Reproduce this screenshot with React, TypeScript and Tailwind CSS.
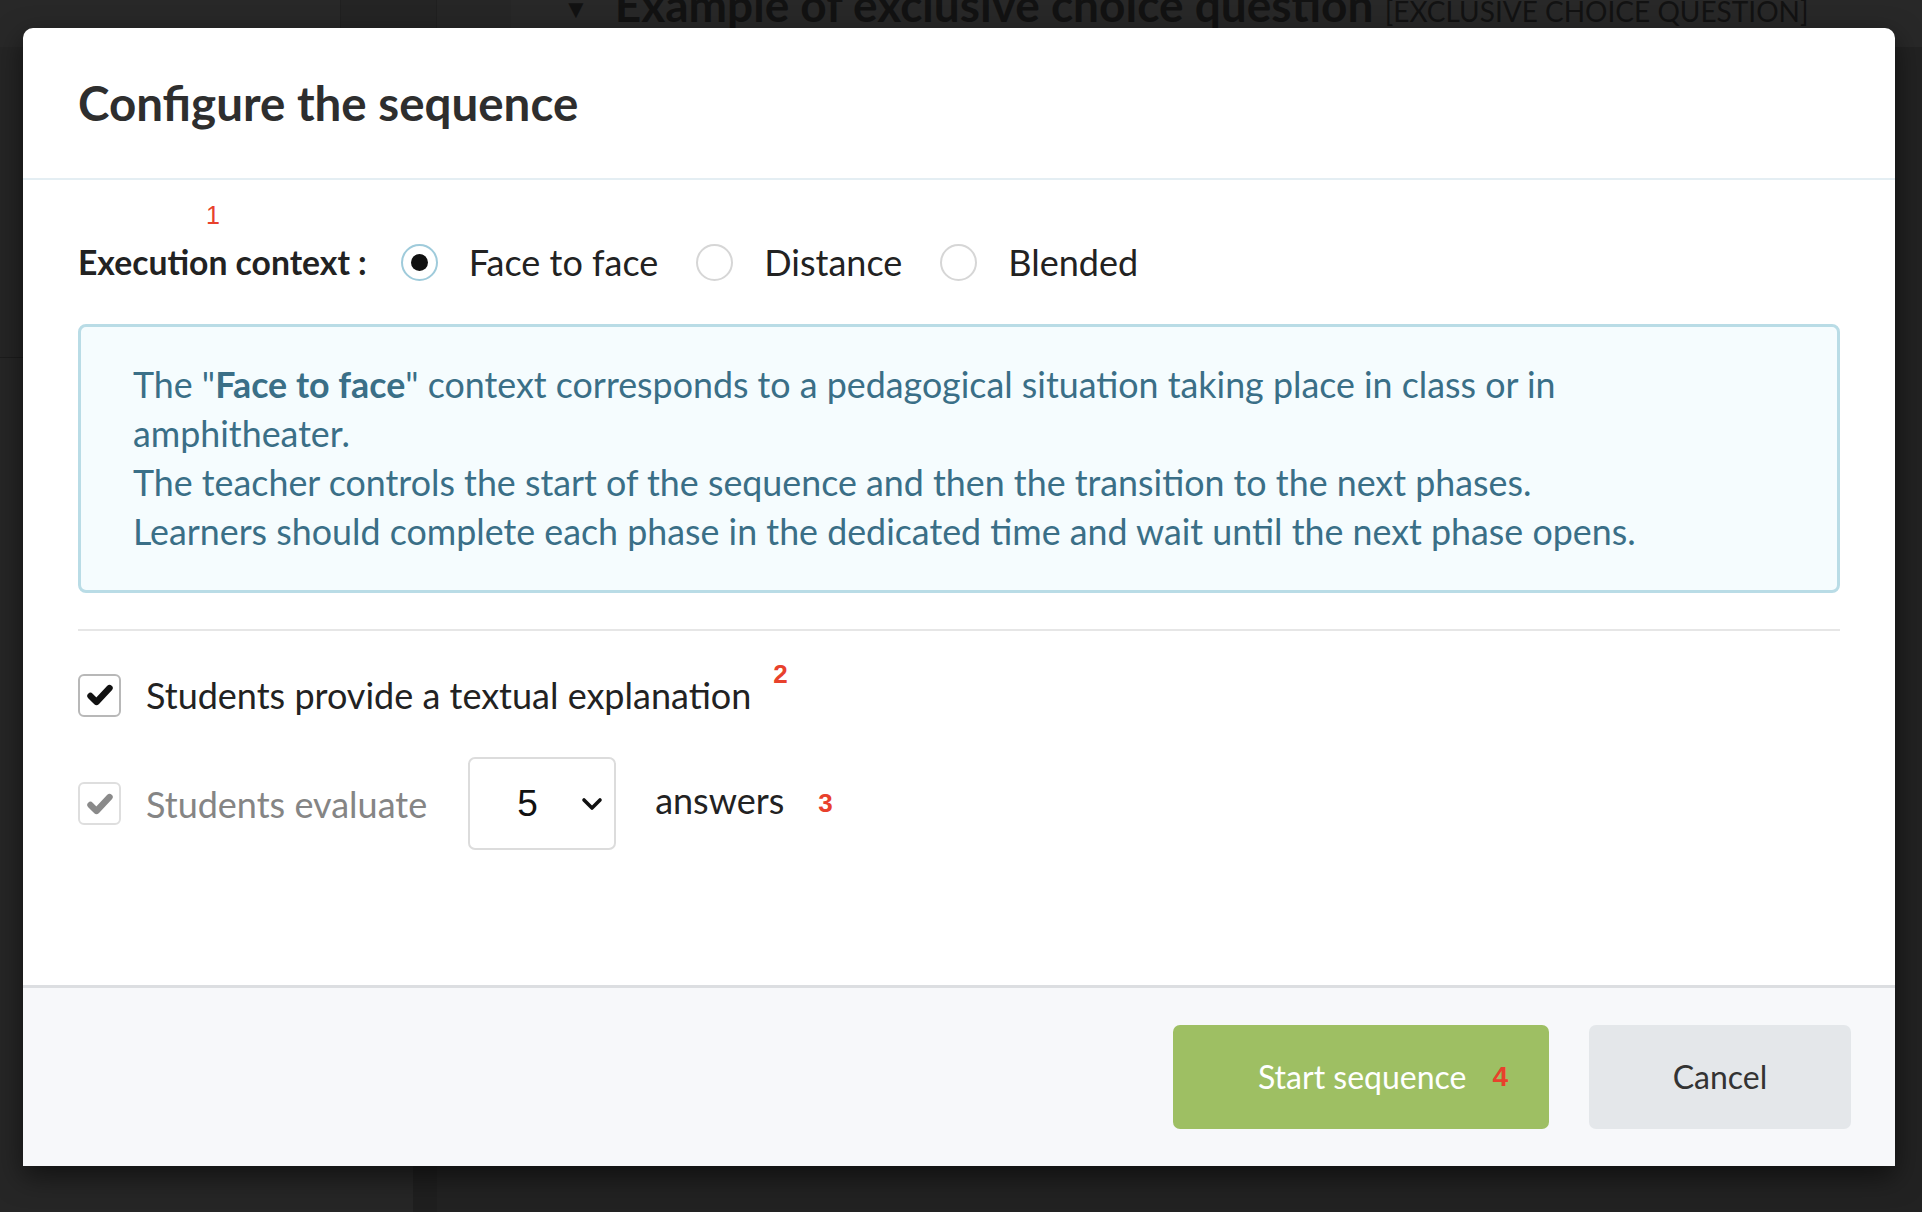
import React from 'react';

const Radio = ({ checked }: { checked?: boolean }) => (
  <span
    className={
      checked
        ? 'flex h-[37px] w-[37px] shrink-0 items-center justify-center rounded-full border-2 border-[#9fcbdb] bg-white'
        : 'flex h-[37px] w-[37px] shrink-0 items-center justify-center rounded-full border-2 border-[#d6d6d6] bg-white'
    }
  >
    {checked && <span className="h-[17px] w-[17px] rounded-full bg-[#111]" />}
  </span>
);

const Check = ({ muted }: { muted?: boolean }) => (
  <span
    className={
      muted
        ? 'flex h-[43px] w-[43px] shrink-0 items-center justify-center rounded-[6px] border-2 border-[#dedede] bg-white'
        : 'flex h-[43px] w-[43px] shrink-0 items-center justify-center rounded-[6px] border-2 border-[#b8b8b8] bg-white'
    }
  >
    <svg viewBox="0 0 24 24" className="h-[28px] w-[28px]">
      <path
        d="M3.8 12.8l5.2 5.2L20.2 6"
        fill="none"
        stroke={muted ? '#8a8a8a' : '#111'}
        strokeWidth="5.4"
        strokeLinecap="round"
        strokeLinejoin="round"
      />
    </svg>
  </span>
);

export default function App() {
  return (
    <div className="relative h-[1212px] w-[1922px] overflow-hidden bg-[#232323] font-['Lato',sans-serif]">
      {/* page behind the overlay */}
      <div className="flex h-[47px] bg-[#282828]">
        <div className="w-[340px]" />
        <div className="w-[96px] border-l border-[#202020] bg-[#242424]" />
        <div className="w-[75px] border-l border-[#202020] bg-[#262626]" />
        <div className="-mt-[25px] flex items-start gap-[26px] pl-[52px] text-[#121212]">
          <span className="pt-[14px] text-[26px]">▼</span>
          <span className="whitespace-nowrap text-[46px] leading-[60px] font-bold">
            Example of exclusive choice question{' '}
            <span className="text-[28px] font-normal">[EXCLUSIVE CHOICE QUESTION]</span>
          </span>
        </div>
      </div>
      <div className="flex h-[1165px]">
        <div className="flex w-[437px] flex-col border-r-[24px] border-[#1f1f1f]">
          <div className="h-[311px] border-b border-[#1c1c1c] bg-[#252525]" />
          <div className="flex-1 bg-[#262626]" />
        </div>
        <div className="flex-1 bg-[#222222]" />
      </div>

      {/* dialog */}
      <div className="absolute left-[23px] top-[28px] flex h-[1138px] w-[1872px] flex-col overflow-hidden rounded-t-[10px] bg-white shadow-[0_10px_28px_rgba(0,0,0,0.55)]">
        <div className="flex h-[152px] shrink-0 items-center border-b-2 border-[#e4eef3] px-[55px]">
          <h1 className="text-[47.5px] leading-none font-bold text-[#2e2e2e]">Configure the sequence</h1>
        </div>

        <div className="flex-1 px-[55px] pt-[57px] text-[#222]">
          <div className="relative flex h-[50px] items-center text-[36px]">
            <span className="absolute -top-[40px] left-[128px] font-['Liberation_Sans',sans-serif] text-[25px] text-[#e8412c]">1</span>
            <span className="mr-[34px] text-[33.7px] font-bold">Execution context :</span>
            <Radio checked />
            <span className="mr-[38px] ml-[31px]">Face to face</span>
            <Radio />
            <span className="mr-[38px] ml-[31px]">Distance</span>
            <Radio />
            <span className="ml-[31px]">Blended</span>
          </div>

          <div className="mt-[37px] rounded-[8px] border-[3px] border-[#b9dce6] bg-[#f5fcfe] px-[52px] pt-[33px] pb-[34px] text-[35.8px] leading-[49px] text-[#3a6f87]">
            The "<b>Face to face</b>" context corresponds to a pedagogical situation taking place in class or in
            <br />
            amphitheater.
            <br />
            The teacher controls the start of the sequence and then the transition to the next phases.
            <br />
            Learners should complete each phase in the dedicated time and wait until the next phase opens.
          </div>

          <div className="mt-[36px] h-[2px] bg-[#e6e6e6]" />

          <div className="mt-[39px] flex h-[50px] items-center text-[36px]">
            <Check />
            <span className="ml-[25px]">Students provide a textual explanation</span>
            <span className="relative -top-[21px] ml-[22px] font-['Liberation_Sans',sans-serif] text-[26px] leading-none font-bold text-[#e8412c]">
              2
            </span>
          </div>

          <div className="mt-[37px] flex h-[93px] items-center text-[36px]">
            <Check muted />
            <span className="ml-[25px] text-[#858585]">Students evaluate</span>
            <div className="ml-[41px] flex h-[93px] w-[148px] items-center justify-between rounded-[7px] border-2 border-[#dcdcdc] pr-[11px] pl-[47px]">
              <span className="font-['Liberation_Sans',sans-serif] text-[37px] text-[#111]">5</span>
              <svg viewBox="0 0 22 14" className="h-[14px] w-[22px]">
                <polyline points="3,3 11,11 19,3" fill="none" stroke="#111" strokeWidth="3.6" strokeLinecap="round" strokeLinejoin="round" />
              </svg>
            </div>
            <span className="relative -top-[4px] ml-[39px]">answers</span>
            <span className="ml-[34px] font-['Liberation_Sans',sans-serif] text-[26px] font-bold text-[#e8412c]">3</span>
          </div>
        </div>

        <div className="flex h-[181px] shrink-0 items-center justify-end gap-[40px] border-t-[3px] border-[#dcdee1] bg-[#f7f8fa] pr-[44px]">
          <button className="flex h-[104px] w-[376px] items-center justify-center gap-[26px] rounded-[7px] bg-[#9ebf63] pl-[44px] text-[32px] text-white">
            <span>Start sequence</span>
            <span className="font-['Liberation_Sans',sans-serif] text-[28px] font-bold text-[#e8412c]">4</span>
          </button>
          <button className="h-[104px] w-[262px] rounded-[7px] bg-[#e4e7ea] text-[32px] text-[#333]">Cancel</button>
        </div>
      </div>
    </div>
  );
}
